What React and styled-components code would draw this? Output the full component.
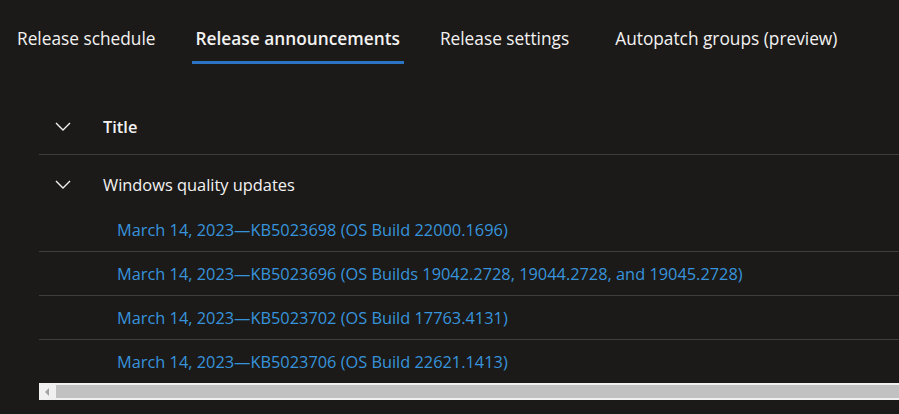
import React from 'react';
import styled, { createGlobalStyle } from 'styled-components';

const GlobalStyle = createGlobalStyle`
  html, body {
    margin: 0;
    padding: 0;
    background: #1b1a19;
  }
  body {
    font-family: 'Open Sans', 'Noto Sans', sans-serif;
    color: #f3f2f1;
  }
`;

const Page = styled.div`
  width: 899px;
  height: 414px;
  overflow: hidden;
  background: #1b1a19;
`;

const Tabs = styled.nav`
  display: flex;
  gap: 32px;
  padding: 20px 0 0 13px;
  height: 44px;
`;

const Tab = styled.div`
  position: relative;
  padding: 0 4px;
  margin-left: ${(p) => p.offset || 0}px;
  height: 44px;
  line-height: 38px;
  font-size: 17.3px;
  font-weight: ${(p) => (p.active ? 600 : 400)};
  color: #f3f2f1;
  white-space: nowrap;

  &::after {
    content: '';
    position: absolute;
    left: 0;
    right: 0;
    bottom: 0;
    height: 3px;
    background: ${(p) => (p.active ? '#2b74c4' : 'transparent')};
  }
`;

const Table = styled.div`
  margin: 35px 0 0 39px;
`;

const Row = styled.div`
  display: flex;
  align-items: center;
  height: ${(p) => p.h}px;
  padding-top: ${(p) => p.pt || 0}px;
  box-sizing: border-box;
  border-bottom: ${(p) => (p.divider ? '1px solid #3f3e3d' : 'none')};
`;

const ChevronCell = styled.div`
  width: 64px;
  display: flex;
  justify-content: center;
  padding-right: 16px;
  box-sizing: border-box;
`;

const HeaderText = styled.span`
  font-size: 16.4px;
  font-weight: 600;
  color: #f3f2f1;
`;

const GroupText = styled.span`
  font-size: 16.4px;
  color: #f3f2f1;
`;

const Link = styled.a`
  margin-left: 78px;
  font-size: 16.35px;
  color: #3794dc;
  text-decoration: none;
  white-space: nowrap;
`;

const Scrollbar = styled.div`
  display: flex;
  height: 17px;
  background: #f0f0f0;
  box-sizing: border-box;
  padding: 2px 0;
`;

const ScrollButton = styled.div`
  width: 17px;
  display: flex;
  align-items: center;
  justify-content: center;
`;

const Thumb = styled.div`
  flex: 1;
  background: #c1c1c1;
`;

const Chevron = () => (
  <svg width="16" height="9" viewBox="0 0 16 9">
    <polyline points="1,1 8,8 15,1" fill="none" stroke="#f3f2f1" strokeWidth="1.4" />
  </svg>
);

const links = [
  'March 14, 2023\u2014KB5023698 (OS Build 22000.1696)',
  'March 14, 2023\u2014KB5023696 (OS Builds 19042.2728, 19044.2728, and 19045.2728)',
  'March 14, 2023\u2014KB5023702 (OS Build 17763.4131)',
  'March 14, 2023\u2014KB5023706 (OS Build 22621.1413)',
];

const App = () => {
  return (
    <Page>
      <GlobalStyle />
      <Tabs>
        <Tab>Release schedule</Tab>
        <Tab active>Release announcements</Tab>
        <Tab>Release settings</Tab>
        <Tab offset={6}>Autopatch groups (preview)</Tab>
      </Tabs>
      <Table>
        <Row h={56} divider>
          <ChevronCell>
            <Chevron />
          </ChevronCell>
          <HeaderText>Title</HeaderText>
        </Row>
        <Row h={53} pt={5}>
          <ChevronCell>
            <Chevron />
          </ChevronCell>
          <GroupText>Windows quality updates</GroupText>
        </Row>
        {links.map((l, i) => (
          <Row key={i} h={i < 3 ? 44 : 43} divider={i < 3}>
            <Link href="#">{l}</Link>
          </Row>
        ))}
        <Scrollbar>
          <ScrollButton>
            <svg width="5" height="8" viewBox="0 0 5 8">
              <polygon points="4,0 4,8 0,4" fill="#a3a3a3" />
            </svg>
          </ScrollButton>
          <Thumb />
        </Scrollbar>
      </Table>
    </Page>
  );
};

export default App;
